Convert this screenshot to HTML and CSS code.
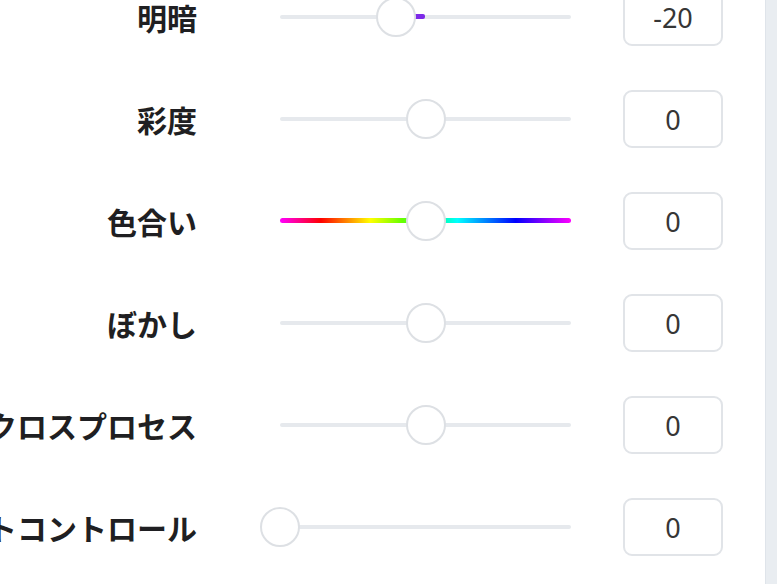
FILE: index.html
```html
<!DOCTYPE html>
<html>
<head>
  <meta charset="utf-8">
  <title>調整</title>
  <link rel="stylesheet" href="styles.css">
</head>
<body>
  <div class="screen">
    <div class="panel">

      <div class="row">
        <div class="label"><span>明暗</span></div>
        <div class="slider">
          <div class="track"></div>
          <div class="fill" style="left: 116.4px; width: 29.1px;"></div>
          <div class="mark"></div>
          <div class="thumb" style="left: 116.4px;"></div>
        </div>
        <div class="value">-20</div>
      </div>

      <div class="row">
        <div class="label"><span>彩度</span></div>
        <div class="slider">
          <div class="track"></div>
          <div class="thumb" style="left: 145.5px;"></div>
        </div>
        <div class="value">0</div>
      </div>

      <div class="row">
        <div class="label"><span>色合い</span></div>
        <div class="slider">
          <div class="track hue"></div>
          <div class="thumb" style="left: 145.5px;"></div>
        </div>
        <div class="value">0</div>
      </div>

      <div class="row">
        <div class="label"><span>ぼかし</span></div>
        <div class="slider">
          <div class="track"></div>
          <div class="thumb" style="left: 145.5px;"></div>
        </div>
        <div class="value">0</div>
      </div>

      <div class="row">
        <div class="label"><span>クロスプロセス</span></div>
        <div class="slider">
          <div class="track"></div>
          <div class="thumb" style="left: 145.5px;"></div>
        </div>
        <div class="value">0</div>
      </div>

      <div class="row">
        <div class="label"><span>ハイライトコントロール</span></div>
        <div class="slider">
          <div class="track"></div>
          <div class="thumb" style="left: 0px;"></div>
        </div>
        <div class="value">0</div>
      </div>

    </div>
    <div class="scrollbar"></div>
  </div>
</body>
</html>
```

FILE: styles.css
```css
html, body { margin: 0; padding: 0; background: #fff; overflow: hidden; }
body { font-family: "Noto Sans", "Noto Sans CJK JP", sans-serif; color: #222; }

.screen { display: flex; width: 778px; height: 584px; overflow: hidden; }
.panel { width: 765px; margin-top: -34px; }
.scrollbar { width: 12px; height: 584px; background: #e9edf1; border-left: 1px solid #dfe4ea; box-sizing: border-box; }

.row { display: grid; grid-template-columns: 197px 374px 152px; height: 102px; align-items: center; }
.label { display: flex; justify-content: flex-end; white-space: nowrap; font-family: "Noto Sans CJK JP", sans-serif; font-size: 30px; font-weight: 700; color: #1f1f22; }
.slider { position: relative; height: 44px; margin-left: 83px; }
.value { margin-left: 52px; height: 58px; box-sizing: border-box; border: 2px solid #e1e4e8; border-radius: 9px; display: flex; align-items: center; justify-content: center; font-size: 27px; color: #363636; }

.track { position: absolute; left: 0; right: 0; top: 20px; height: 4px; border-radius: 2px; background: #e6e9ed; }
.track.hue { top: 19px; height: 5px; border-radius: 3px; background: linear-gradient(90deg, #ff00ff 0%, #ff0000 14%, #ffff00 31%, #66ff00 42%, #00ff99 54%, #00ffff 61%, #0000ff 81%, #9900ff 92%, #ff00ff 100%); }
.fill { position: absolute; top: 19px; height: 5px; background: #7d2ae8; border-radius: 2px; }
.mark { position: absolute; left: 141.5px; top: -16px; width: 9px; height: 9px; border-radius: 50%; background: #dcdfe3; }
.thumb { position: absolute; top: 2px; width: 40px; height: 40px; margin-left: -20px; box-sizing: border-box; border: 2px solid #dde0e4; border-radius: 50%; background: #fff; }
```
